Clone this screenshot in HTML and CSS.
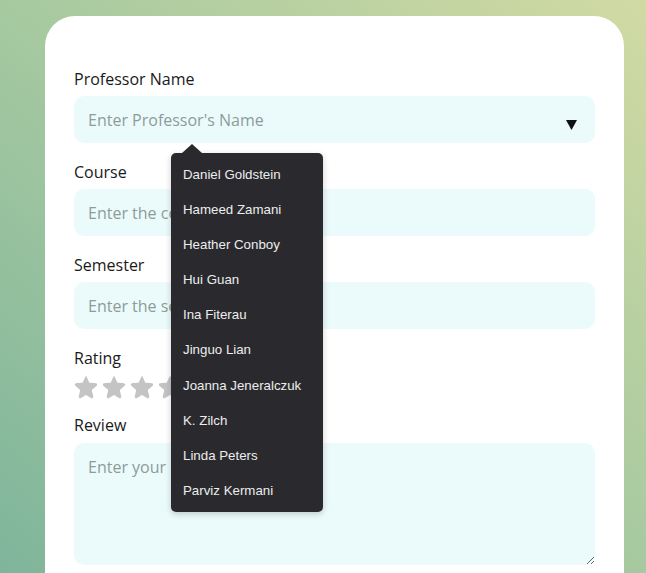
FILE: index.html
```html
<!DOCTYPE html>
<html lang="en">
<head>
<meta charset="utf-8">
<title>Review</title>
<link rel="stylesheet" href="styles.css">
</head>
<body>
<div class="card">
  <form class="form">
    <label class="label">Professor Name</label>
    <div class="select-wrap">
      <input class="input" type="text" placeholder="Enter Professor's Name">
      <svg class="caret" width="11" height="10" viewBox="0 0 11 10"><polygon points="0,0 11,0 5.5,10" fill="#111"/></svg>
      <div class="menu">
        <div class="item">Daniel Goldstein</div>
        <div class="item">Hameed Zamani</div>
        <div class="item">Heather Conboy</div>
        <div class="item">Hui Guan</div>
        <div class="item">Ina Fiterau</div>
        <div class="item">Jinguo Lian</div>
        <div class="item">Joanna Jeneralczuk</div>
        <div class="item">K. Zilch</div>
        <div class="item">Linda Peters</div>
        <div class="item">Parviz Kermani</div>
      </div>
    </div>

    <label class="label">Course</label>
    <input class="input" type="text" placeholder="Enter the course">

    <label class="label">Semester</label>
    <input class="input" type="text" placeholder="Enter the semester">

    <label class="label">Rating</label>
    <div class="stars">
      <svg class="star" viewBox="0 0 24 24"><path d="M12 1.8 L14.9 8.2 L21.8 8.8 C22.6 8.9 22.9 9.8 22.3 10.3 L17.1 14.8 L18.7 21.6 C18.9 22.4 18 23 17.3 22.6 L12 19.2 L6.7 22.6 C6 23 5.1 22.4 5.3 21.6 L6.9 14.8 L1.7 10.3 C1.1 9.8 1.4 8.9 2.2 8.8 L9.1 8.2 Z" fill="#c4c4c4" stroke="#c4c4c4" stroke-width="1.2" stroke-linejoin="round"/></svg>
      <svg class="star" viewBox="0 0 24 24"><path d="M12 1.8 L14.9 8.2 L21.8 8.8 C22.6 8.9 22.9 9.8 22.3 10.3 L17.1 14.8 L18.7 21.6 C18.9 22.4 18 23 17.3 22.6 L12 19.2 L6.7 22.6 C6 23 5.1 22.4 5.3 21.6 L6.9 14.8 L1.7 10.3 C1.1 9.8 1.4 8.9 2.2 8.8 L9.1 8.2 Z" fill="#c4c4c4" stroke="#c4c4c4" stroke-width="1.2" stroke-linejoin="round"/></svg>
      <svg class="star" viewBox="0 0 24 24"><path d="M12 1.8 L14.9 8.2 L21.8 8.8 C22.6 8.9 22.9 9.8 22.3 10.3 L17.1 14.8 L18.7 21.6 C18.9 22.4 18 23 17.3 22.6 L12 19.2 L6.7 22.6 C6 23 5.1 22.4 5.3 21.6 L6.9 14.8 L1.7 10.3 C1.1 9.8 1.4 8.9 2.2 8.8 L9.1 8.2 Z" fill="#c4c4c4" stroke="#c4c4c4" stroke-width="1.2" stroke-linejoin="round"/></svg>
      <svg class="star" viewBox="0 0 24 24"><path d="M12 1.8 L14.9 8.2 L21.8 8.8 C22.6 8.9 22.9 9.8 22.3 10.3 L17.1 14.8 L18.7 21.6 C18.9 22.4 18 23 17.3 22.6 L12 19.2 L6.7 22.6 C6 23 5.1 22.4 5.3 21.6 L6.9 14.8 L1.7 10.3 C1.1 9.8 1.4 8.9 2.2 8.8 L9.1 8.2 Z" fill="#c4c4c4" stroke="#c4c4c4" stroke-width="1.2" stroke-linejoin="round"/></svg>
      <svg class="star" viewBox="0 0 24 24"><path d="M12 1.8 L14.9 8.2 L21.8 8.8 C22.6 8.9 22.9 9.8 22.3 10.3 L17.1 14.8 L18.7 21.6 C18.9 22.4 18 23 17.3 22.6 L12 19.2 L6.7 22.6 C6 23 5.1 22.4 5.3 21.6 L6.9 14.8 L1.7 10.3 C1.1 9.8 1.4 8.9 2.2 8.8 L9.1 8.2 Z" fill="#c4c4c4" stroke="#c4c4c4" stroke-width="1.2" stroke-linejoin="round"/></svg>
    </div>

    <label class="label label-review">Review</label>
    <textarea class="textarea" placeholder="Enter your review"></textarea>
  </form>
</div>
</body>
</html>
```
FILE: styles.css
```css
html, body {
  margin: 0;
  padding: 0;
  height: 100%;
}
body {
  background: linear-gradient(to top right, #7fb59b 0%, #a6c9a0 50%, #d1daa3 100%);
  font-family: "Open Sans", "Noto Sans", sans-serif;
  overflow: hidden;
}
.card {
  margin: 16px 22px 0 45px;
  width: 579px;
  height: 700px;
  background: #fff;
  border-radius: 30px;
  box-sizing: border-box;
  padding: 51px 29px 0 29px;
}
.form {
  display: flex;
  flex-direction: column;
}
.label {
  font-size: 16px;
  line-height: 24px;
  color: #1a1a1a;
  margin-bottom: 5px;
}
.select-wrap {
  position: relative;
  margin-bottom: 17px;
}
.select-wrap .input {
  margin-bottom: 0;
}
.input {
  display: block;
  width: 100%;
  height: 47px;
  box-sizing: border-box;
  border: none;
  outline: none;
  border-radius: 10px;
  background: #ebfbfb;
  padding: 0 14px;
  font-family: "Open Sans", "Noto Sans", sans-serif;
  font-size: 16px;
  color: #333;
  margin-bottom: 17px;
}
.input::placeholder, .textarea::placeholder {
  color: #8d9b9a;
}
.caret {
  position: absolute;
  right: 18px;
  top: 24px;
}
.menu {
  position: absolute;
  left: 97px;
  top: calc(100% + 10px);
  width: 152px;
  box-sizing: border-box;
  padding: 3.5px 0;
  background: #2a2a2e;
  border-radius: 5px;
  box-shadow: 0 2px 6px rgba(0,0,0,0.2);
  z-index: 5;
}
.menu::before {
  content: "";
  position: absolute;
  left: 11px;
  top: -9px;
  border-left: 10px solid transparent;
  border-right: 10px solid transparent;
  border-bottom: 9px solid #2a2a2e;
}
.item {
  height: 35.2px;
  line-height: 35.2px;
  padding-left: 12px;
  font-family: "Liberation Sans", Arial, sans-serif;
  font-size: 13.3px;
  color: #ededed;
  white-space: nowrap;
}
.stars {
  display: flex;
  gap: 4px;
  height: 28px;
  align-items: center;
  margin-top: -2px;
  margin-bottom: 12px;
}
.star {
  width: 24px;
  height: 24px;
  display: block;
}
.label-review {
  margin-bottom: 6px;
}
.textarea {
  display: block;
  width: 100%;
  height: 122px;
  box-sizing: border-box;
  border: none;
  outline: none;
  border-radius: 10px;
  background: #ebfbfb;
  padding: 12px 14px;
  font-family: "Open Sans", "Noto Sans", sans-serif;
  font-size: 16px;
  line-height: 24px;
  color: #333;
  resize: vertical;
}
```
